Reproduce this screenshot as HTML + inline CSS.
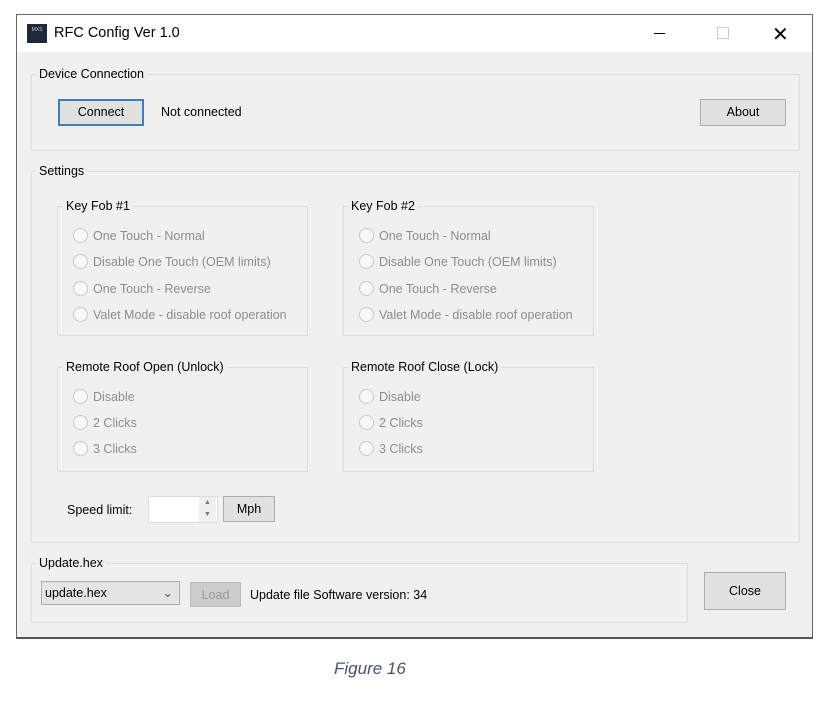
<!DOCTYPE html><html><head><style>
body{margin:0;width:832px;height:701px;background:#fff;position:relative;font-family:"Liberation Sans",sans-serif;font-size:12.5px;color:#000;overflow:hidden}
.a{position:absolute}
.win{left:16px;top:14px;width:795px;height:622px;border:1px solid #666;background:#f0f0f0;border-bottom:2px solid #555}
.tb{left:0;top:0;width:795px;height:37px;background:#fff}
.gb{position:absolute;border:1px solid #dcdcdc}
.gl{position:absolute;background:#f0f0f0;padding:0 3px;font-size:12.5px}
.btn{position:absolute;background:#e1e1e1;border:1px solid #adadad;text-align:center;box-sizing:border-box}
.r{position:absolute;color:#8d8d8d;font-size:12.5px}
.r:before{content:"";position:absolute;left:-20px;top:-1px;width:15px;height:15px;border-radius:50%;border:1px solid #c8c8c8;background:#f8f8f8;box-sizing:border-box}
</style></head><body>
<div class="a win">
<div class="a tb">
<div class="a" style="left:10px;top:9px;width:20px;height:19px;background:#1e2a3a;color:#ccc;font-size:5px;text-align:center;line-height:12px">MXS</div>
<div class="a" style="left:37px;top:10px;font-size:14.5px">RFC Config Ver 1.0</div>
<div class="a" style="left:637px;top:18px;width:11px;height:1px;background:#000"></div>
<div class="a" style="left:700px;top:12px;width:10px;height:10px;border:1px solid #ccc"></div>
<div class="a" style="left:755px;top:7px;font-size:20px;font-weight:300">✕</div>
</div>
</div>
<div class="gb" style="left:31px;top:74px;width:767px;height:75px"></div><div class="gl" style="left:36px;top:67px">Device Connection</div>
<div class="btn" style="left:58px;top:99px;width:86px;height:27px;border:2px solid #3d7fb8;line-height:23px">Connect</div>
<div class="a" style="left:161px;top:105px">Not connected</div>
<div class="btn" style="left:700px;top:99px;width:86px;height:27px;line-height:25px">About</div>
<div class="gb" style="left:31px;top:171px;width:767px;height:370px"></div><div class="gl" style="left:36px;top:164px">Settings</div>
<div class="gb" style="left:57px;top:206px;width:249px;height:128px"></div><div class="gl" style="left:63px;top:199px">Key Fob #1</div>
<div class="r" style="left:93px;top:229px">One Touch - Normal</div>
<div class="r" style="left:93px;top:255px">Disable One Touch (OEM limits)</div>
<div class="r" style="left:93px;top:282px">One Touch - Reverse</div>
<div class="r" style="left:93px;top:308px">Valet Mode - disable roof operation</div>
<div class="gb" style="left:343px;top:206px;width:249px;height:128px"></div><div class="gl" style="left:348px;top:199px">Key Fob #2</div>
<div class="r" style="left:379px;top:229px">One Touch - Normal</div>
<div class="r" style="left:379px;top:255px">Disable One Touch (OEM limits)</div>
<div class="r" style="left:379px;top:282px">One Touch - Reverse</div>
<div class="r" style="left:379px;top:308px">Valet Mode - disable roof operation</div>
<div class="gb" style="left:57px;top:367px;width:249px;height:103px"></div><div class="gl" style="left:63px;top:360px">Remote Roof Open (Unlock)</div>
<div class="r" style="left:93px;top:390px">Disable</div>
<div class="r" style="left:93px;top:416px">2 Clicks</div>
<div class="r" style="left:93px;top:442px">3 Clicks</div>
<div class="gb" style="left:343px;top:367px;width:249px;height:103px"></div><div class="gl" style="left:348px;top:360px">Remote Roof Close (Lock)</div>
<div class="r" style="left:379px;top:390px">Disable</div>
<div class="r" style="left:379px;top:416px">2 Clicks</div>
<div class="r" style="left:379px;top:442px">3 Clicks</div>
<div class="a" style="left:67px;top:503px">Speed limit:</div>
<div class="a" style="left:148px;top:496px;width:68px;height:25px;background:#fff;border:1px solid #ddd"></div>
<div class="a" style="left:199px;top:497px;width:17px;height:25px;background:#f0f0f0;color:#777;font-size:7px;text-align:center;line-height:12px">▲<br>▼</div>
<div class="btn" style="left:223px;top:496px;width:52px;height:26px;line-height:24px">Mph</div>
<div class="gb" style="left:31px;top:563px;width:655px;height:58px"></div><div class="gl" style="left:36px;top:556px">Update.hex</div>
<div class="a" style="left:41px;top:581px;width:139px;height:24px;background:#e5e5e5;border:1px solid #adadad;box-sizing:border-box;padding:4px 3px">update.hex<span style="position:absolute;right:6px;top:3px;color:#555">⌄</span></div>
<div class="btn" style="left:190px;top:582px;width:51px;height:25px;line-height:25px;color:#999;background:#ccc;border-color:#bbb">Load</div>
<div class="a" style="left:250px;top:588px">Update file Software version: 34</div>
<div class="btn" style="left:704px;top:572px;width:82px;height:38px;line-height:36px">Close</div>
<div class="a" style="left:334px;top:659px;font-size:17px;font-style:italic;color:#44546a">Figure 16</div>
</body></html>
